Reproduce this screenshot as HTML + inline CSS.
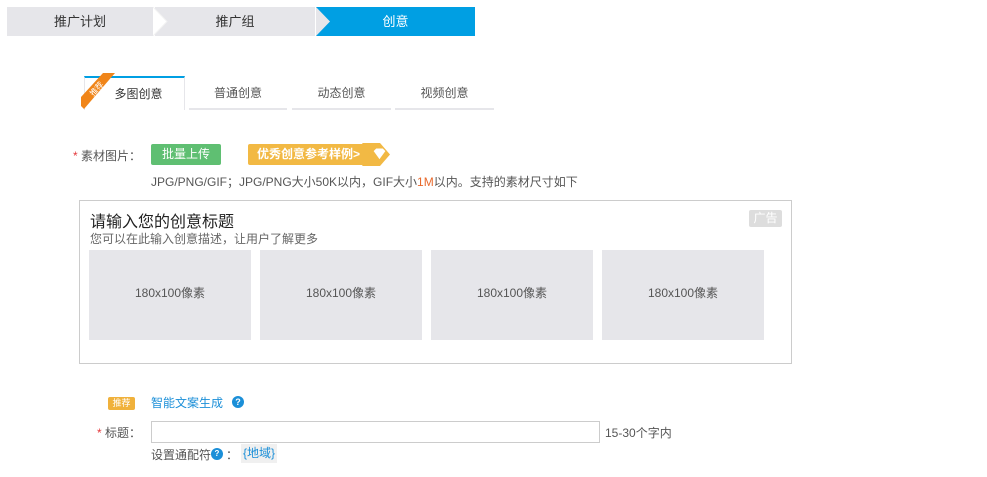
<!DOCTYPE html>
<html><head><meta charset="utf-8"><style>
*{margin:0;padding:0;box-sizing:border-box}
body{width:987px;height:477px;background:#fff;font-family:"Liberation Sans","Noto Sans CJK SC",sans-serif;font-size:12px;color:#555;position:relative;overflow:hidden}
.a{position:absolute}
.step{position:absolute;top:7px;height:29px;line-height:29px;text-align:center;font-size:13px;color:#333}
.tab{position:absolute;top:78px;height:32px;line-height:31px;text-align:center;font-size:12px;color:#555;border-bottom:2px solid #e6e6ea}
.img{position:absolute;top:250px;width:162px;height:90px;background:#e6e6ea;text-align:center;line-height:86px;font-size:12px;color:#555}
</style></head><body>
<div class="step" style="left:7px;width:146px;background:#e6e6ea">推广计划</div>
<div class="step" style="left:155px;width:160px;background:#e6e6ea">推广组</div>
<svg class="a" style="left:153px;top:7px" width="18" height="29"><polygon points="0,0 14,14.5 0,29" fill="#fff"/><polyline points="0,0 14,14.5 0,29" fill="none" stroke="#f2f2f2"/></svg>
<div class="step" style="left:316px;width:159px;background:#009fe3;color:#fff">创意</div>
<svg class="a" style="left:316px;top:7px" width="16" height="29"><polygon points="0,0 14,14.5 0,29" fill="#e6e6ea"/></svg>

<div class="tab" style="left:84px;width:101px;top:76px;height:34px;border-top:2px solid #009fe3;border-left:1px solid #e6e6ea;border-right:1px solid #e6e6ea;border-bottom:none;line-height:32px;color:#333;padding-left:8px">多图创意</div>
<svg class="a" style="left:81px;top:73px" width="34" height="36"><polygon points="0,24 22,0 34,0 3,36 0,33" fill="#f08519"/><text x="8" y="22" font-size="8" fill="#fff" transform="rotate(-48 12 18)" font-family="Noto Sans CJK SC">推荐</text></svg>
<div class="tab" style="left:189px;width:98px">普通创意</div>
<div class="tab" style="left:292px;width:99px">动态创意</div>
<div class="tab" style="left:395px;width:99px">视频创意</div>

<div class="a" style="left:73px;top:147px;font-size:12px"><span style="color:#e4393c">*</span> 素材图片：</div>
<div class="a" style="left:151px;top:144px;width:70px;height:21px;background:#5fbf72;color:#fff;text-align:center;line-height:21px;font-size:12px;border-radius:2px">批量上传</div>
<div class="a" style="left:248px;top:144px;width:122px;height:21px;background:#f2b944;color:#fff;line-height:21px;font-size:12px;padding-left:9px;border-radius:2px 0 0 2px;font-weight:bold">优秀创意参考样例&gt; &gt;</div>
<svg class="a" style="left:362px;top:143px" width="30" height="23"><polygon points="0,0 18,0 28,11.5 18,23 0,23 8,11.5" fill="#f2b944"/><polygon points="11,8 14,5 21,5 24,8 17.5,17" fill="#fff" stroke="#f2b944"/></svg>
<div class="a" style="left:151px;top:173px;color:#555">JPG/PNG/GIF；JPG/PNG大小50K以内，GIF大小<span style="color:#e8682b">1M</span>以内。支持的素材尺寸如下</div>

<div class="a" style="left:79px;top:200px;width:713px;height:164px;border:1px solid #ccc"></div>
<div class="a" style="left:90px;top:208px;font-size:16px;color:#222">请输入您的创意标题</div>
<div class="a" style="left:90px;top:230px;color:#666">您可以在此输入创意描述，让用户了解更多</div>
<div class="a" style="left:749px;top:210px;width:33px;height:17px;background:#ddd;color:#fff;text-align:center;line-height:17px;font-size:12px;border-radius:2px">广告</div>
<div class="img" style="left:89px">180x100像素</div>
<div class="img" style="left:260px">180x100像素</div>
<div class="img" style="left:431px">180x100像素</div>
<div class="img" style="left:602px">180x100像素</div>

<div class="a" style="left:108px;top:397px;width:27px;height:13px;background:#f0b13b;color:#fff;font-size:9px;text-align:center;line-height:13px;border-radius:2px">推荐</div>
<div class="a" style="left:151px;top:394px;color:#1b8fd8">智能文案生成</div>
<div class="a" style="left:232px;top:396px;width:12px;height:12px;border-radius:50%;background:#1b8fd8;color:#fff;font-size:9px;font-weight:bold;text-align:center;line-height:12px">?</div>
<div class="a" style="left:97px;top:424px"><span style="color:#e4393c">*</span> 标题：</div>
<div class="a" style="left:151px;top:421px;width:449px;height:22px;border:1px solid #ccc"></div>
<div class="a" style="left:605px;top:424px">15-30个字内</div>
<div class="a" style="left:151px;top:446px">设置通配符</div>
<div class="a" style="left:211px;top:448px;width:12px;height:12px;border-radius:50%;background:#1b8fd8;color:#fff;font-size:8px;font-weight:bold;text-align:center;line-height:12px">?</div>
<div class="a" style="left:226px;top:446px">：</div>
<div class="a" style="left:241px;top:444px;height:19px;padding:0 2px;background:#f0f0f0;color:#1b8fd8;line-height:19px">{地域}</div>
</body></html>
